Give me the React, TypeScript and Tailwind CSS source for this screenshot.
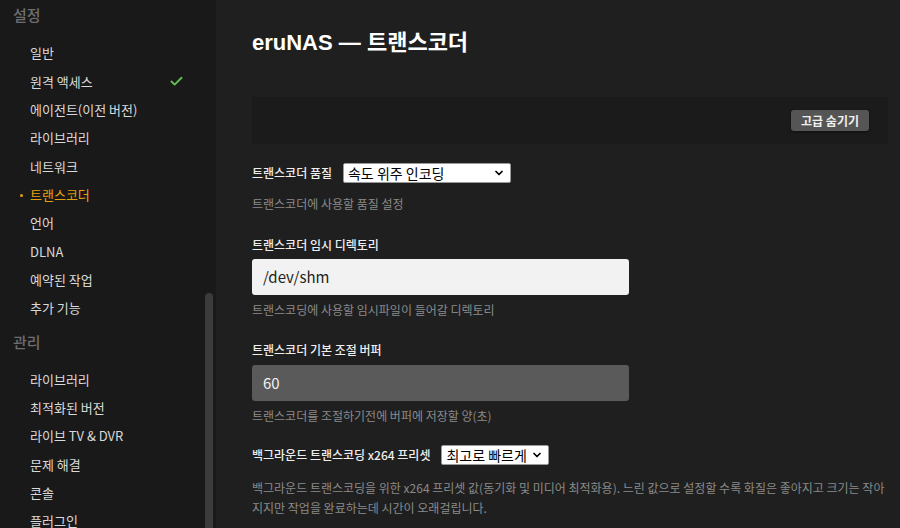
import React from "react";
import { Check, ChevronDown } from "lucide-react";

const KR = { fontFamily: '"Noto Sans CJK KR", "Noto Sans", sans-serif' };
const TITLE = { fontFamily: '"Liberation Sans", "Noto Sans CJK KR", sans-serif' };

const settings = [
  "일반",
  "원격 액세스",
  "에이전트(이전 버전)",
  "라이브러리",
  "네트워크",
  "트랜스코더",
  "언어",
  "DLNA",
  "예약된 작업",
  "추가 기능",
];
const manage = ["라이브러리", "최적화된 버전", "라이브 TV & DVR", "문제 해결", "콘솔", "플러그인"];

function Item({ label, active, check }: { label: string; active?: boolean; check?: boolean }) {
  return (
    <div className="relative flex h-[28.33px] items-center pl-[30px] pr-[32px]">
      {active && <span className="absolute left-[20px] top-[13px] h-[3px] w-[3px] rounded-full bg-[#e5a00d]" />}
      <span className={`text-[13px] ${active ? "text-[#e5a00d]" : "text-[#d9d9d9]"}`}>{label}</span>
      {check && <Check className="ml-auto text-[#5fbf4f]" size={15} strokeWidth={3} />}
    </div>
  );
}

function FakeSelect({ value, w }: { value: string; w: string }) {
  return (
    <div className={`flex h-[20px] shrink-0 ${w} items-center rounded-[2px] border border-[#9a9a9a] bg-white pl-[4px] pr-[5px]`}>
      <span className="whitespace-nowrap text-[14px] leading-none text-black">{value}</span>
      <ChevronDown className="ml-auto shrink-0 text-black" size={12} strokeWidth={3.5} />
    </div>
  );
}

export default function App() {
  return (
    <div className="flex h-[528px] w-[900px] overflow-hidden bg-[#1f1f1f]" style={KR}>
      <aside className="relative h-full w-[216px] shrink-0 bg-[#1a191a]">
        <div className="pt-[5px]">
          <div className="flex h-[20px] items-center pl-[13px] text-[15px] font-medium text-[#6e6e6e]">설정</div>
          <div className="mt-[14px]">
            {settings.map((s) => (
              <Item key={s} label={s} active={s === "트랜스코더"} check={s === "원격 액세스"} />
            ))}
          </div>
          <div className="mt-[10px] flex h-[20px] items-center pl-[13px] text-[15px] font-medium text-[#6e6e6e]">관리</div>
          <div className="mt-[13px]">
            {manage.map((s) => (
              <Item key={s} label={s} />
            ))}
          </div>
        </div>
        <div className="absolute left-[205px] top-[293px] h-[260px] w-[8px] rounded-full bg-[#3b3b3b]" />
      </aside>

      <main className="flex-1 pl-[36px] pr-[12px]">
        <h1 className="mt-[28px] h-[29px] text-[22px] font-bold leading-[29px] text-white" style={TITLE}>
          eruNAS — 트랜스코더
        </h1>
        <div className="mt-[40px] flex h-[47px] items-center justify-end bg-[#1b1b1b] pr-[19px]">
          <button className="flex h-[21px] w-[78px] items-center justify-center rounded-[3px] bg-[#555555] text-[12px] font-bold text-[#f0f0f0] shadow-[0_1px_3px_rgba(0,0,0,0.5)]">
            고급 숨기기
          </button>
        </div>

        <div className="mt-[19px] flex h-[20px] items-center">
          <span className="mr-[11px] text-[12px] font-medium text-[#eeeeee]">트랜스코더 품질</span>
          <FakeSelect value="속도 위주 인코딩" w="w-[168px]" />
        </div>
        <div className="mt-[11px] h-[20px] text-[12px] leading-[20px] text-[#8a8a8a]">트랜스코더에 사용할 품질 설정</div>

        <div className="mt-[21px] h-[20px] text-[12px] font-medium leading-[20px] text-[#eeeeee]">트랜스코더 임시 디렉토리</div>
        <div className="mt-[4px] flex h-[36px] w-[377px] items-center rounded-[3px] bg-[#f2f2f2] px-[11px] text-[15px] text-[#222222]">
          /dev/shm
        </div>
        <div className="mt-[5px] h-[20px] text-[12px] leading-[20px] text-[#8a8a8a]">트랜스코딩에 사용할 임시파일이 들어갈 디렉토리</div>

        <div className="mt-[20px] h-[20px] text-[12px] font-medium leading-[20px] text-[#eeeeee]">트랜스코더 기본 조절 버퍼</div>
        <div className="mt-[5px] flex h-[36px] w-[377px] items-center rounded-[3px] bg-[#5a5a5a] px-[11px] text-[15px] text-[#f2f2f2]">
          60
        </div>
        <div className="mt-[5px] h-[20px] text-[12px] leading-[20px] text-[#8a8a8a]">트랜스코더를 조절하기전에 버퍼에 저장할 양(초)</div>

        <div className="mt-[19px] flex h-[20px] items-center">
          <span className="mr-[11px] text-[12px] font-medium text-[#eeeeee]">백그라운드 트랜스코딩 x264 프리셋</span>
          <FakeSelect value="최고로 빠르게" w="w-[108px]" />
        </div>
        <div className="mt-[13px] text-[12px] leading-[20px] text-[#8a8a8a]">
          백그라운드 트랜스코딩을 위한 x264 프리셋 값(동기화 및 미디어 최적화용). 느린 값으로 설정할 수록 화질은 좋아지고 크기는 작아
          <br />
          지지만 작업을 완료하는데 시간이 오래걸립니다.
        </div>
      </main>
    </div>
  );
}
